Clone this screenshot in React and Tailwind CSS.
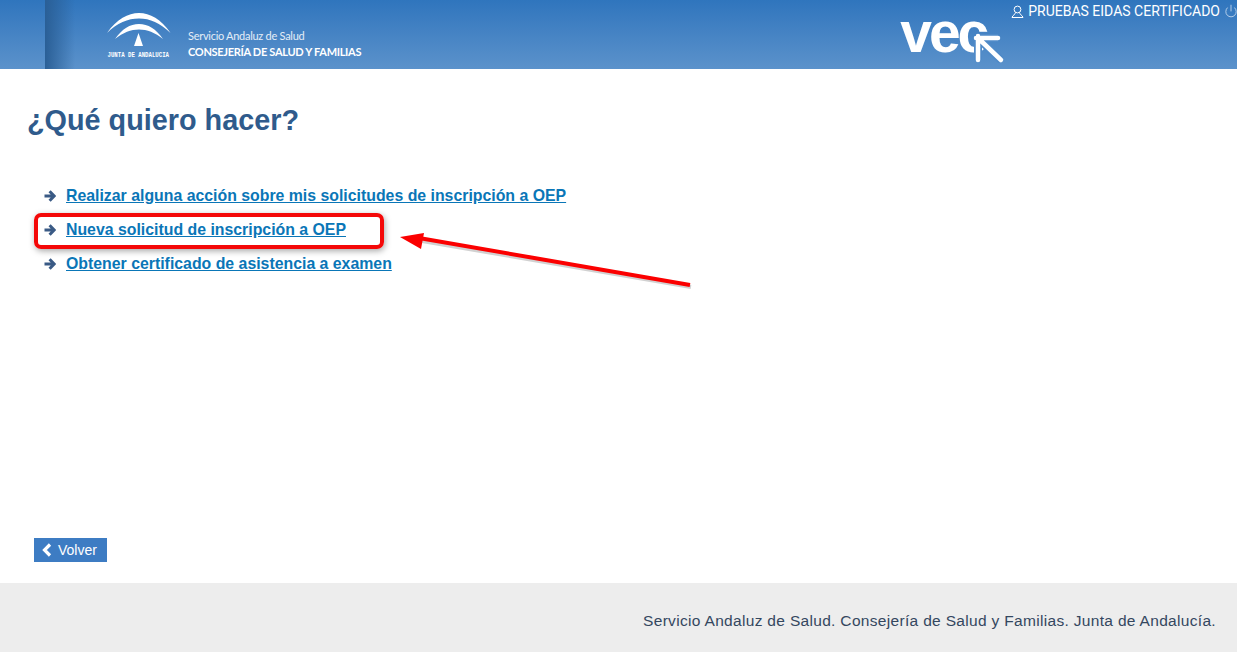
import React from 'react';
import { Power } from 'lucide-react';

const links = [
  'Realizar alguna acción sobre mis solicitudes de inscripción a OEP',
  'Nueva solicitud de inscripción a OEP',
  'Obtener certificado de asistencia a examen',
];

function JuntaLogo() {
  return (
    <svg width="64" height="46" viewBox="0 0 64 46" className="shrink-0">
      <path d="M0 20 C10 6 21 0 32 0 C43 0 54 6 63.5 20 C53 10 43 5.5 32 5.5 C21 5.5 10 10 0 20 Z" fill="#fff" />
      <path d="M8 26 C15 16 23 11 32 11 C41 11 49 16 56 26 C48 19.5 40 16.5 32 16.5 C24 16.5 16 19.5 8 26 Z" fill="#fff" />
      <path d="M31.5 20 L36 33 L27 33 Z" fill="#fff" />
      <text transform="translate(0.5 44) scale(0.76 1)" fill="#fff" fontSize="7.5" fontWeight="700" fontFamily="'Liberation Mono', monospace">JUNTA DE ANDALUCIA</text>
    </svg>
  );
}

function ArrowBullet() {
  return (
    <svg width="12" height="12" viewBox="0 0 12 12" className="shrink-0">
      <path d="M0.5 6 H9.5 M5.6 1.2 L10.2 6 L5.6 10.8" fill="none" stroke="#3a5a85" strokeWidth="3" />
    </svg>
  );
}

function UserIcon() {
  return (
    <svg width="13" height="13" viewBox="0 0 13 13" fill="none" stroke="#fff" strokeWidth="1" className="shrink-0">
      <circle cx="6.5" cy="4.5" r="3.4" />
      <path d="M4.6 7.5 C4.4 9.5 1.8 9.8 1 12.5 H12 C11.2 9.8 8.6 9.5 8.4 7.5" />
    </svg>
  );
}

export default function App() {
  return (
    <div className="relative flex h-[652px] flex-col overflow-hidden bg-white font-['Liberation_Sans',sans-serif]">
      <header className="relative flex h-[69px] shrink-0 bg-gradient-to-b from-[#2f75bd] to-[#5b92cb]">
        <div className="absolute left-[45px] top-0 h-full w-[30px] bg-gradient-to-r from-[#2a5f96] to-transparent" />
        <div className="relative flex items-start pl-[107px] pt-[13px]">
          <JuntaLogo />
          <div className="ml-[17px] pt-[15px] font-['Lato',sans-serif] text-white">
            <p className="text-[11px] leading-[16px] tracking-[-0.28px] text-[#e4edf7]">Servicio Andaluz de Salud</p>
            <p className="text-[11px] font-bold leading-[16px] tracking-[-0.3px]">CONSEJERÍA DE SALUD Y FAMILIAS</p>
          </div>
        </div>
        <div className="relative ml-auto flex items-start">
          <div className="relative mr-[7px] mt-[7px] h-[60px] w-[105px]">
            <span className="absolute left-[1px] top-[2px] text-[57px] font-bold leading-[46px] tracking-[-3px] text-white">vec</span>
            <svg width="34" height="34" viewBox="0 0 34 34" className="absolute left-[73px] top-[25px]">
              <path d="M6 6 L29 28 M4 6 H26 M6 4 V28" fill="none" stroke="#4f8ac8" strokeWidth="8" />
              <path d="M6 6 L29 28 M4 6 H26 M6 4 V28" fill="none" stroke="#fff" strokeWidth="4.5" strokeLinecap="round" />
            </svg>
          </div>
          <div className="-mr-[1px] flex items-center pt-[3px] text-white">
            <UserIcon />
            <span className="ml-[4px] font-['Roboto',sans-serif] text-[14px] leading-[16px]">PRUEBAS EIDAS CERTIFICADO</span>
            <Power className="ml-[4px] h-[14px] w-[14px] text-[#c3d8ee]" strokeWidth={1.5} />
          </div>
        </div>
      </header>

      <main className="relative flex min-h-0 flex-1 flex-col pl-[27px]">
        <h1 className="mt-[34px] text-[28.8px] font-bold leading-[34px] text-[#2f5b8c]">¿Qué quiero hacer?</h1>
        <ul className="mt-[49px] flex flex-col gap-[14px] pl-[17px]">
          {links.map(text => (
            <li key={text} className="flex h-[20px] items-center gap-[10px]">
              <ArrowBullet />
              <a href="#" className="text-[15.85px] font-bold leading-[20px] text-[#0a76b7] underline">{text}</a>
            </li>
          ))}
        </ul>
        <a href="#" className="mt-auto mb-[21px] ml-[7px] flex h-[24px] w-[73px] items-center bg-[#3d7cc3] pl-[8px] text-[14px] text-white">
          <svg width="10" height="14" viewBox="0 0 10 14" className="shrink-0">
            <path d="M8 1.5 L2.5 7 L8 12.5" fill="none" stroke="#fff" strokeWidth="3.2" />
          </svg>
          <span className="ml-[6px]">Volver</span>
        </a>
      </main>

      <footer className="flex h-[69px] shrink-0 items-center justify-end bg-[#ededed] pr-[21px] pt-[6px]">
        <p className="text-[15.5px] tracking-[0.32px] text-[#34475f]">Servicio Andaluz de Salud. Consejería de Salud y Familias. Junta de Andalucía.</p>
      </footer>

      {/* anotaciones en rojo sobre la captura */}
      <div className="pointer-events-none absolute left-[34px] top-[213px] h-[36px] w-[350px] rounded-[7px] border-[4px] border-[#f40808] shadow-[1px_2px_6px_rgba(0,0,0,0.35)]" />
      <svg width="310" height="70" viewBox="0 0 310 70" className="pointer-events-none absolute left-[395px] top-[225px]">
        <path d="M26 14 L295 60" stroke="rgba(0,0,0,0.18)" strokeWidth="4" transform="translate(1 2)" />
        <path d="M24 13 L295 60" stroke="#fb0000" strokeWidth="4" />
        <path d="M5 12 L29 8 L26 24 Z" fill="#fb0000" />
      </svg>
    </div>
  );
}
